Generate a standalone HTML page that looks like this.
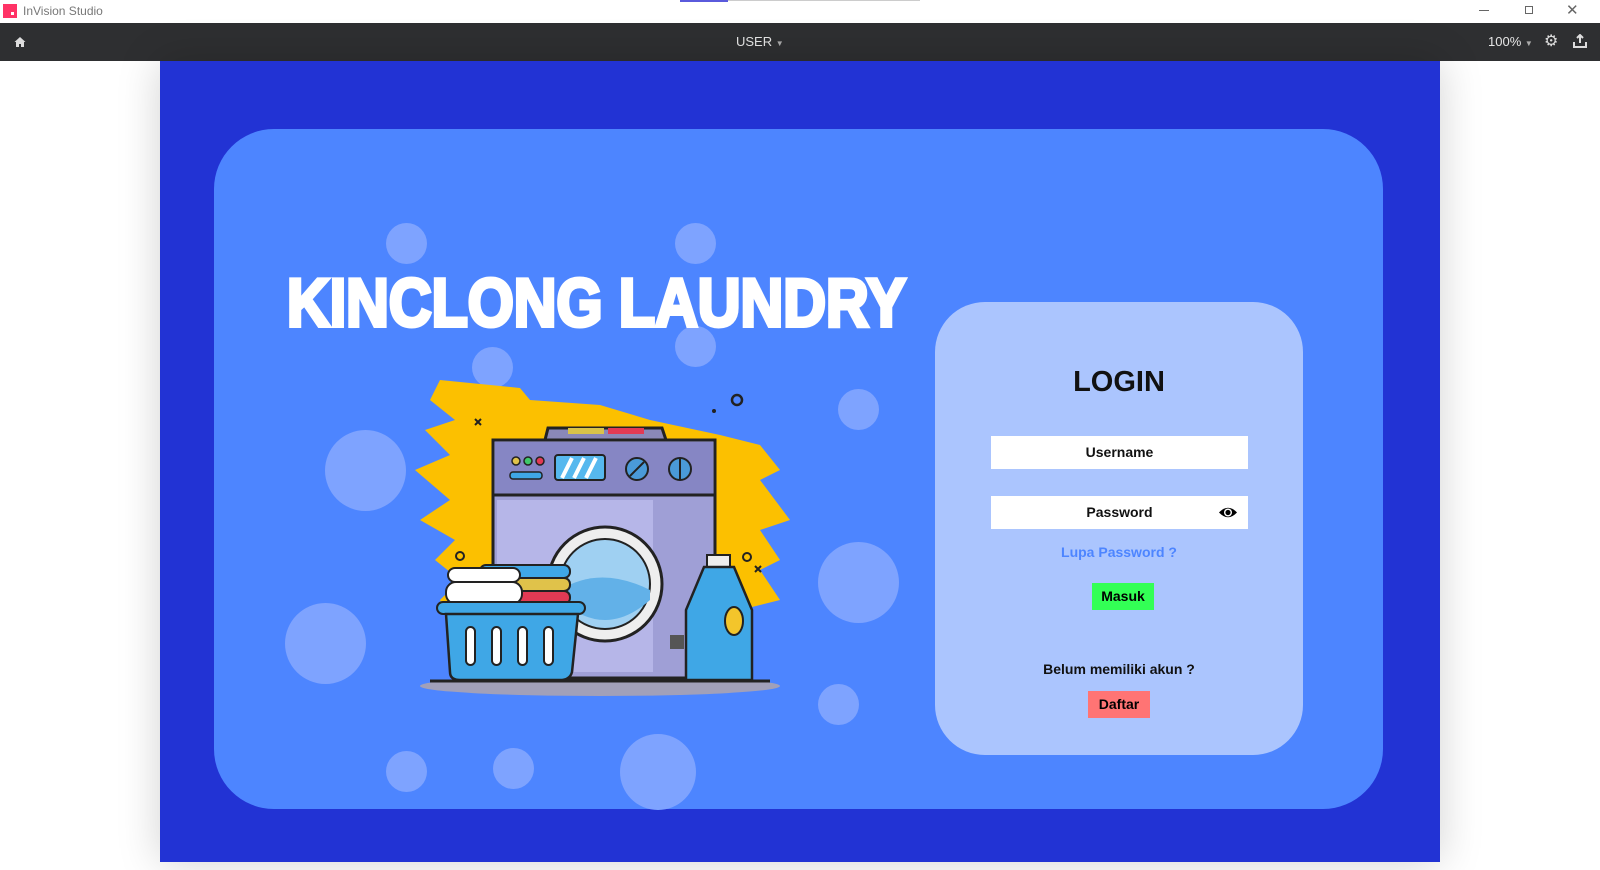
<!DOCTYPE html>
<html><head><meta charset="utf-8"><style>
*{margin:0;padding:0;box-sizing:border-box}
body{width:1600px;height:870px;overflow:hidden;background:#fff;font-family:"Liberation Sans",sans-serif;position:relative}
.tb{position:absolute;left:0;top:0;width:1600px;height:23px;background:#fff}
.tool{position:absolute;left:0;top:23px;width:1600px;height:38px;background:#2e2f31;color:#e6e6e6;font-size:13px}
.canvas{position:absolute;left:160px;top:61px;width:1280px;height:801px;background:#2233d4;box-shadow:0 0 40px rgba(0,0,0,.18)}
.card{position:absolute;left:214px;top:129px;width:1169px;height:680px;background:#4d85ff;border-radius:60px;overflow:hidden}
.b{position:absolute;border-radius:50%;background:#7ea3ff}
.title{position:absolute;left:287px;top:264px;font-size:68px;line-height:78px;font-weight:bold;color:#fff;-webkit-text-stroke:4px #fff;white-space:nowrap;transform:scaleX(0.87);transform-origin:left}
.login{position:absolute;left:935px;top:302px;width:368px;height:453px;background:#abc5fe;border-radius:50px}
.t{position:absolute;left:0;width:100%;text-align:center;font-weight:bold;color:#111}
.inp{position:absolute;left:56px;width:257px;height:33px;background:#fff;font-weight:bold;font-size:14px;text-align:center;line-height:33px;color:#111}
</style></head><body>
<div class="tb">
 <div style="position:absolute;left:3px;top:4px;width:14px;height:14px;background:#ff3366"><div style="position:absolute;right:3px;bottom:3px;width:3px;height:3px;background:#fff"></div></div>
 <div style="position:absolute;left:23px;top:4px;font-size:12px;color:#777">InVision Studio</div>
 <div style="position:absolute;left:680px;top:0;width:48px;height:2px;background:#5a5adc"></div>
 <div style="position:absolute;left:728px;top:0;width:192px;height:1px;background:#ccc"></div>
 <div style="position:absolute;left:1479px;top:10px;width:10px;height:1px;background:#666"></div>
 <div style="position:absolute;left:1525px;top:6px;width:8px;height:8px;border:1px solid #666"></div>
 <div style="position:absolute;left:1566px;top:1px;font-size:15px;color:#666">✕</div>
</div>
<div class="tool">
 <svg style="position:absolute;left:14px;top:13px" width="12" height="12" viewBox="0 0 12 12"><path d="M6 1L0.5 6H2V11H5V8H7V11H10V6H11.5Z" fill="#ddd"/></svg>
 <div style="position:absolute;left:736px;top:11px">USER <span style="font-size:8px;color:#aaa">▼</span></div>
 <div style="position:absolute;left:1488px;top:11px">100% <span style="font-size:8px;color:#aaa">▼</span></div>
 <div style="position:absolute;left:1544px;top:8px;font-size:16px;color:#ddd">⚙</div>
 <svg style="position:absolute;left:1573px;top:11px" width="14" height="14" viewBox="0 0 14 14"><path d="M7 1V9M4 4L7 1L10 4M1 8V13H13V8" stroke="#ddd" stroke-width="2" fill="none"/></svg>
</div>
<div class="canvas"></div>
<div class="card"></div>
<div class="b" style="left:386px;top:223px;width:41px;height:41px"></div>
<div class="b" style="left:675px;top:223px;width:41px;height:41px"></div>
<div class="b" style="left:675px;top:326px;width:41px;height:41px"></div>
<div class="b" style="left:472px;top:347px;width:41px;height:41px"></div>
<div class="b" style="left:838px;top:389px;width:41px;height:41px"></div>
<div class="b" style="left:325px;top:430px;width:81px;height:81px"></div>
<div class="b" style="left:818px;top:542px;width:81px;height:81px"></div>
<div class="b" style="left:285px;top:603px;width:81px;height:81px"></div>
<div class="b" style="left:818px;top:684px;width:41px;height:41px"></div>
<div class="b" style="left:386px;top:751px;width:41px;height:41px"></div>
<div class="b" style="left:493px;top:748px;width:41px;height:41px"></div>
<div class="b" style="left:620px;top:734px;width:76px;height:76px"></div>
<div class="title">KINCLONG LAUNDRY</div>
<svg style="position:absolute;left:0;top:0" width="1600" height="870">
 <g fill="#fcc000">
  <path d="M440 380 L520 388 L530 400 L600 405 L650 420 L720 435 L760 445 L780 470 L760 480 L790 520 L760 530 L780 560 L760 570 L780 600 L740 610 L720 620 L450 620 L440 600 L460 580 L435 560 L455 540 L420 520 L450 500 L415 470 L450 455 L425 430 L455 420 L430 400 Z"/>
 </g>
 <ellipse cx="600" cy="686" rx="180" ry="10" fill="#b7a6a8" opacity=".8"/>
 <path d="M545 440 L548 428 L662 428 L666 440Z" fill="#8a88b8" stroke="#222" stroke-width="3"/>
 <rect x="568" y="428" width="36" height="6" fill="#d9c34a"/><rect x="608" y="428" width="36" height="6" fill="#e23a54"/>
 <rect x="493" y="440" width="222" height="238" fill="#9f9fd6" stroke="#222" stroke-width="3"/>
 <rect x="495" y="442" width="218" height="53" fill="#8686c4"/>
 <line x1="493" y1="495" x2="715" y2="495" stroke="#222" stroke-width="3"/>
 <rect x="497" y="500" width="156" height="172" fill="#b6b6e8"/>
 <circle cx="516" cy="461" r="4" fill="#e0c24a" stroke="#222" stroke-width="1.5"/><circle cx="528" cy="461" r="4" fill="#3fc86a" stroke="#222" stroke-width="1.5"/><circle cx="540" cy="461" r="4" fill="#e23a54" stroke="#222" stroke-width="1.5"/>
 <rect x="510" y="472" width="32" height="7" rx="3" fill="#3fa7e6" stroke="#222" stroke-width="1.5"/>
 <rect x="555" y="455" width="50" height="25" rx="3" fill="#56b8ee" stroke="#222" stroke-width="2"/>
 <path d="M562 478 L572 458 M574 478 L584 458 M586 478 L596 458" stroke="#fff" stroke-width="4"/>
 <circle cx="637" cy="469" r="11" fill="#4a9ad8" stroke="#222" stroke-width="2"/><line x1="630" y1="476" x2="644" y2="462" stroke="#222" stroke-width="2"/>
 <circle cx="680" cy="469" r="11" fill="#4a9ad8" stroke="#222" stroke-width="2"/><line x1="680" y1="458" x2="680" y2="480" stroke="#222" stroke-width="2"/>
 <circle cx="605" cy="584" r="57" fill="#eee" stroke="#222" stroke-width="3"/>
 <circle cx="605" cy="584" r="45" fill="#9fd0f2" stroke="#222" stroke-width="2"/>
 <path d="M560 590 Q600 565 650 590 L650 600 Q605 640 560 600Z" fill="#62b1e8"/>
 <rect x="670" y="635" width="14" height="14" fill="#555"/>
 <rect x="480" y="565" width="90" height="13" rx="6" fill="#3fa7e6" stroke="#222" stroke-width="2"/>
 <rect x="480" y="578" width="90" height="13" rx="6" fill="#e0c24a" stroke="#222" stroke-width="2"/>
 <rect x="480" y="591" width="90" height="13" rx="6" fill="#e23a54" stroke="#222" stroke-width="2"/>
 <rect x="448" y="568" width="72" height="14" rx="7" fill="#fff" stroke="#222" stroke-width="2"/>
 <rect x="446" y="582" width="76" height="22" rx="10" fill="#fff" stroke="#222" stroke-width="2"/>
 <rect x="437" y="602" width="148" height="12" rx="6" fill="#3fa7e6" stroke="#222" stroke-width="2"/>
 <path d="M446 614 H578 L572 672 Q570 680 560 680 H460 Q450 680 450 672Z" fill="#3fa7e6" stroke="#222" stroke-width="2.5"/>
 <rect x="466" y="627" width="9" height="38" rx="4.5" fill="#fff" stroke="#222" stroke-width="2"/>
 <rect x="492" y="627" width="9" height="38" rx="4.5" fill="#fff" stroke="#222" stroke-width="2"/>
 <rect x="518" y="627" width="9" height="38" rx="4.5" fill="#fff" stroke="#222" stroke-width="2"/>
 <rect x="544" y="627" width="9" height="38" rx="4.5" fill="#fff" stroke="#222" stroke-width="2"/>
 <rect x="707" y="555" width="23" height="12" fill="#eee" stroke="#222" stroke-width="2"/>
 <path d="M704 567 H734 L752 610 V680 H686 V610Z" fill="#3fa7e6" stroke="#222" stroke-width="2.5"/>
 <ellipse cx="734" cy="621" rx="9" ry="14" fill="#f3c52b" stroke="#222" stroke-width="2"/>
 <line x1="430" y1="681" x2="770" y2="681" stroke="#222" stroke-width="3"/>
 <circle cx="737" cy="400" r="5" fill="none" stroke="#222" stroke-width="2.5"/><circle cx="714" cy="411" r="2" fill="#222"/>
 <circle cx="460" cy="556" r="4" fill="none" stroke="#222" stroke-width="2"/><circle cx="747" cy="557" r="4" fill="none" stroke="#222" stroke-width="2"/>
 <path d="M475 419 l6 6 m0 -6 l-6 6 M755 566 l6 6 m0 -6 l-6 6" stroke="#222" stroke-width="2"/>
</svg>
<div class="login">
 <div class="t" style="top:64px;font-size:29px">LOGIN</div>
 <div class="inp" style="top:134px">Username</div>
 <div class="inp" style="top:194px">Password
  <svg style="position:absolute;right:10px;top:10px" width="20" height="13" viewBox="0 0 20 13"><path d="M1 6.5Q10 -3 19 6.5Q10 16 1 6.5Z" fill="#000"/><circle cx="10" cy="6.5" r="4" fill="#fff"/><circle cx="10" cy="6.5" r="2.6" fill="#000"/></svg></div>
 <div class="t" style="top:242px;font-size:14px;color:#4d85ff">Lupa Password ?</div>
 <div style="position:absolute;left:157px;top:281px;width:62px;height:27px;background:#33ff55;font-weight:bold;font-size:14px;text-align:center;line-height:27px">Masuk</div>
 <div class="t" style="top:359px;font-size:14px">Belum memiliki akun ?</div>
 <div style="position:absolute;left:153px;top:389px;width:62px;height:27px;background:#ff7474;font-weight:bold;font-size:14px;text-align:center;line-height:27px">Daftar</div>
</div>
</body></html>
